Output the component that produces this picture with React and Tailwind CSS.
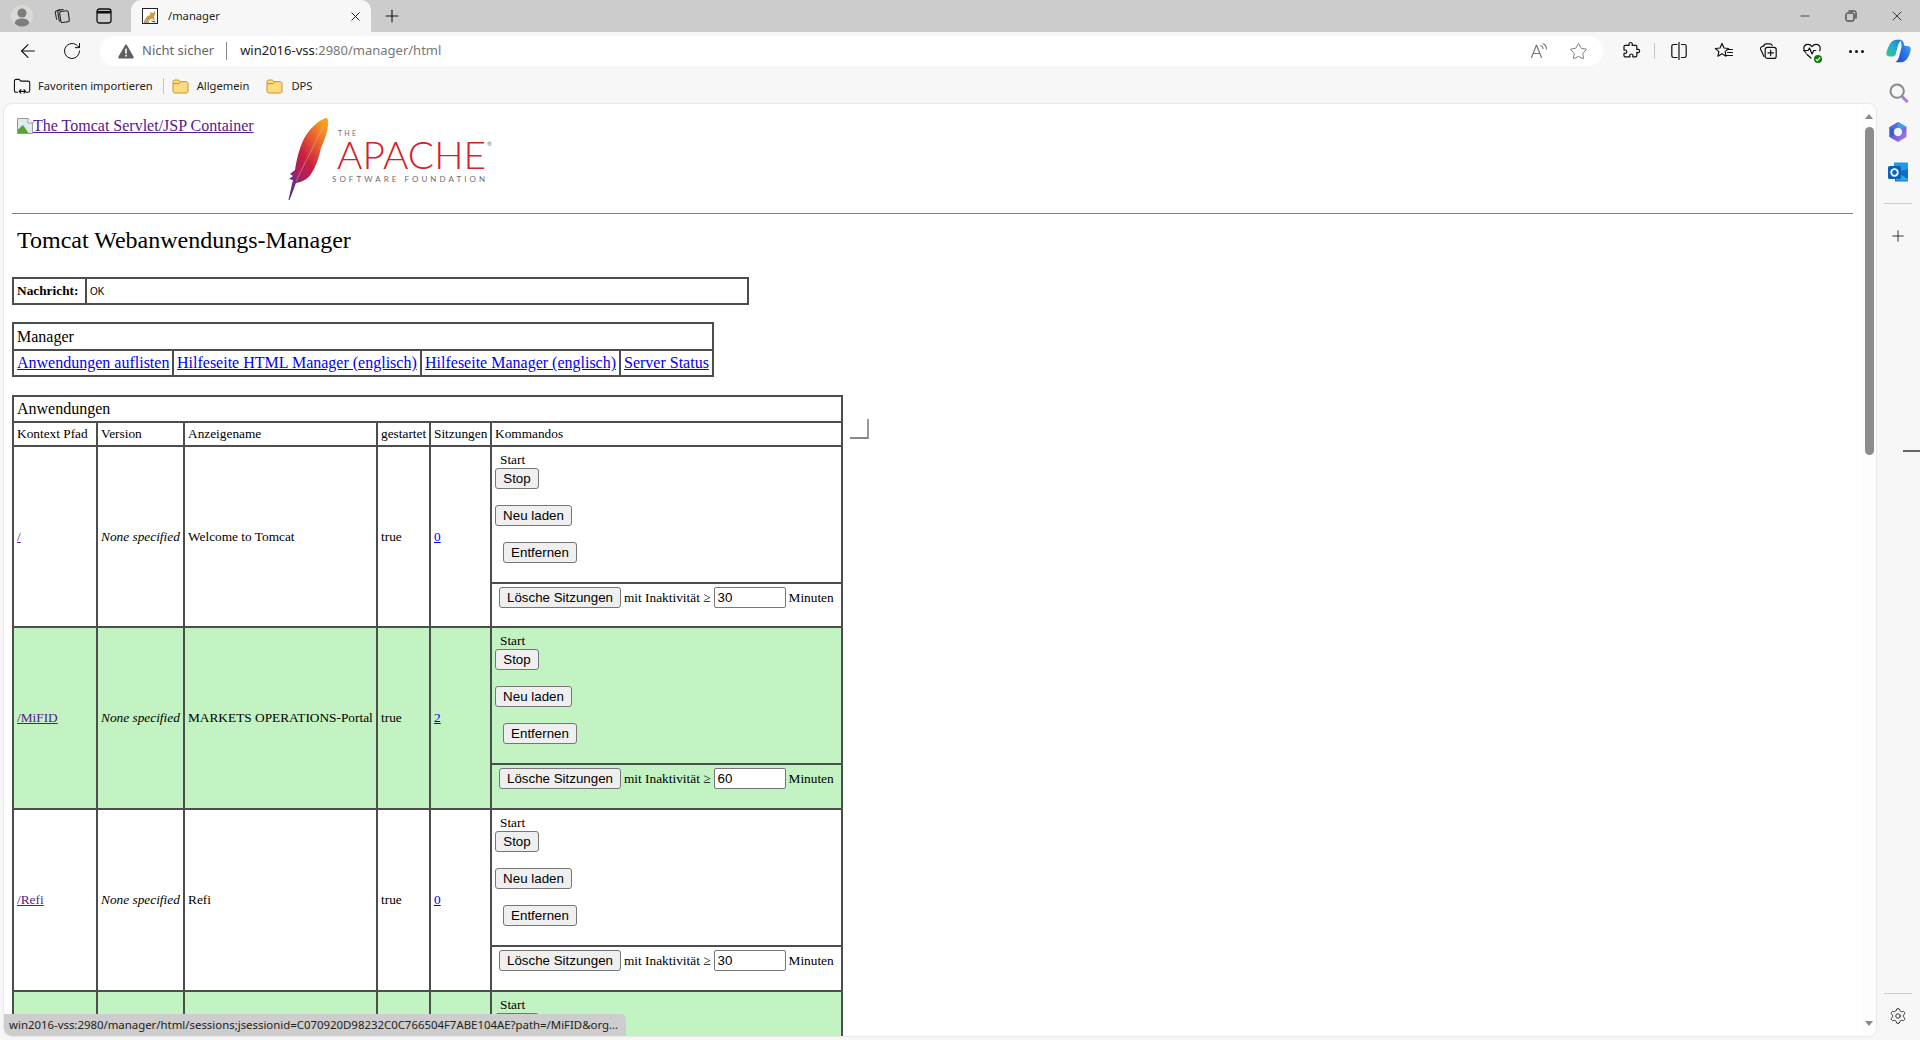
import React from "react";
import { ArrowLeft, Minus, Plus, RotateCw, Search, Settings, Star, X } from "lucide-react";

const sans = "font-['Noto_Sans',sans-serif]";
const ctl = "font-['Liberation_Sans',Arial,sans-serif] text-[13.33px] text-black";
const cell = "border-2 border-[#4d4d4d] px-[3px] py-0";

const Outline = ({ size = 20, children, className = "" }) => (
  <svg
    width={size}
    height={size}
    viewBox="0 0 20 20"
    fill="none"
    stroke="currentColor"
    strokeWidth="1.2"
    strokeLinecap="round"
    strokeLinejoin="round"
    className={className}
  >
    {children}
  </svg>
);

const Profile = () => (
  <svg width="22" height="22" viewBox="0 0 22 22">
    <circle cx="11" cy="11" r="11" fill="#d9d9d5" />
    <circle cx="11" cy="8" r="4.6" fill="#7d7d7d" />
    <path d="M3.6 18.2C4.6 14.6 7.4 13.6 11 13.6s6.4 1 7.4 4.6A10.6 10.6 0 0 1 11 21.6a10.6 10.6 0 0 1-7.4-3.4Z" fill="#7d7d7d" />
  </svg>
);

const CollectionsTab = () => (
  <Outline size={18} className="text-[#222]">
    <rect x="8" y="4.6" width="9.6" height="12.4" rx="1.8" transform="rotate(-8 12 11)" />
    <path d="M7 15.6 5.4 5.6c-.2-1 .3-1.8 1.3-2l4.6-.9" />
    <path d="M4 13.6 2.6 6.4c-.2-1 .3-1.8 1.2-2l4-1.6" />
  </Outline>
);

const VerticalTabs = () => (
  <svg width="16" height="16" viewBox="0 0 16 16" fill="none" stroke="#111" strokeWidth="1.3">
    <rect x="1" y="1" width="14" height="14" rx="2.4" />
    <path d="M1 4.2h14" strokeWidth="2.6" />
  </svg>
);

const TabFavicon = () => (
  <svg width="16" height="16" viewBox="0 0 16 16">
    <rect x="0.5" y="0.5" width="15" height="15" fill="#fff" stroke="#222" />
    <path d="M2 13 5 8.5 8 7l.5-3.5L10 5l2-.5.5-2 1 3-1.6 3.2L13 13l-3-2.4-3.4 2.2Z" fill="#c99a4b" />
    <path d="M2 14h5M9.5 13l4 1" stroke="#444" />
  </svg>
);

const Warning = () => (
  <svg width="16" height="15" viewBox="0 0 16 15">
    <path d="M8 .6c.5 0 .8.2 1 .6l6.6 11.6c.4.7 0 1.6-.9 1.6H1.3c-.9 0-1.3-.9-.9-1.6L7 1.2c.2-.4.5-.6 1-.6Z" fill="#5f5f5f" />
    <rect x="7.2" y="4.6" width="1.6" height="5" fill="#fff" />
    <rect x="7.2" y="10.8" width="1.6" height="1.7" fill="#fff" />
  </svg>
);

const ReadAloud = () => (
  <Outline size={20} className="text-[#777]">
    <path d="M2.5 16.5 7.5 4l5 12.5M4.2 12.5h6.6" />
    <path d="M12 4.5c1.4.6 2 1.6 2 3M14 2.8c2.2.8 3.4 2.6 3.4 5" />
  </Outline>
);

const PuzzleIcon = () => (
  <Outline size={20} className="text-[#111]">
    <path d="M8 2.6c.3-1.5 3-1.5 3.3 0 .1.7-.3 1.2-.2 1.7h3.7c.6 0 1 .4 1 1v3.2c.5.2 1-.3 1.7-.2 1.5.3 1.5 3 0 3.3-.7.1-1.2-.3-1.7-.2v3.4c0 .6-.4 1-1 1h-3c-.1-.6.3-1.1.2-1.7-.3-1.5-3-1.5-3.3 0-.1.6.3 1.1.2 1.7H4c-.6 0-1-.4-1-1v-2.6c.5-.2 1 .2 1.6.1 1.6-.3 1.6-3 0-3.3-.6-.1-1.1.3-1.6.1V5.3c0-.6.4-1 1-1h4.2c.1-.5-.3-1-.2-1.7Z" />
  </Outline>
);

const SplitIcon = () => (
  <Outline size={20} className="text-[#111]">
    <path d="M8 3.5H4.5c-1 0-1.7.7-1.7 1.7v9.6c0 1 .7 1.7 1.7 1.7H8" />
    <path d="M12.5 3.5h3c1 0 1.7.7 1.7 1.7v9.6c0 1-.7 1.7-1.7 1.7h-3" />
    <path d="M10 1.5v17" />
  </Outline>
);

const FavoritesIcon = () => (
  <Outline size={20} className="text-[#111]">
    <path d="M8 2.4 10 7l4.6.5-3.5 3.1 1 4.6L8 12.8l-4.1 2.4 1-4.6L1.4 7.5 6 7Z" />
    <path d="M13.5 8.5h5M13.5 11.5h5M12.5 14.5h6" />
  </Outline>
);

const CollectionsIcon = () => (
  <Outline size={20} className="text-[#111]">
    <path d="M6 15.5 2.6 8.2c-.4-1 0-1.8.8-2.2L6 4.6" />
    <path d="M6 4.8c0-1.3.8-2 2-2h4c1.2 0 1.8.6 2.2 1.6" />
    <rect x="7.2" y="6.4" width="11" height="11" rx="2.2" />
    <path d="M12.7 9.2v5.4M10 11.9h5.4" />
  </Outline>
);

const HealthIcon = () => (
  <div className="relative">
    <Outline size={20} className="text-[#111]">
      <path d="M4 12C2.600 10.800 1.800 9.400 1.800 7.600 1.800 5.200 3.600 3.400 6 3.400c1.600 0 3 .8 4 2.200 1-1.400 2.400-2.200 4-2.200 2.400 0 4.200 1.800 4.200 4.200 0 .8-.2 1.500-.5 2.200" />
      <path d="M1.500 9.500h4.500l1.500-2.500 2.500 6 1.800-3.500h2" />
      <path d="M5 13.500l4 3.500" />
    </Outline>
    <span className="absolute right-0 bottom-[-2px] flex h-[8px] w-[8px] items-center justify-center rounded-full bg-[#107c10]">
      <svg width="6" height="6" viewBox="0 0 6 6" fill="none" stroke="#fff" strokeWidth="1.1">
        <path d="M.8 3.2 2.400 4.600 5.200 1.400" />
      </svg>
    </span>
  </div>
);

const Copilot = () => (
  <svg width="25" height="24" viewBox="0 0 25 24">
    <defs>
      <linearGradient id="copA" x1="0" y1="1" x2="1" y2="0">
        <stop offset="0" stopColor="#35c98a" />
        <stop offset="0.6" stopColor="#1fa7d8" />
        <stop offset="1" stopColor="#1a6fd0" />
      </linearGradient>
      <linearGradient id="copB" x1="0" y1="1" x2="1" y2="0">
        <stop offset="0" stopColor="#1f3fd6" />
        <stop offset="0.6" stopColor="#2f7fe8" />
        <stop offset="1" stopColor="#49c0ee" />
      </linearGradient>
    </defs>
    <path d="M7.500 1.500C9 .6 14 .4 15.500 1.200 13.800 2 12.800 3.800 12 6.500L9.800 15c-.4 1.600-1.200 2.400-3 2.400H3.500C1 17.400-.2 15.500.5 13.200 1.700 9.500 3.500 3.500 7.500 1.500Z" fill="url(#copA)" />
    <path d="M14.600 1C16.300 1 17 2 17.500 3.600L18.600 7H21c2.600 0 4.200 1.600 3.700 4-.9 4-2.700 9.600-6.600 11.400-2 1-6.500 1.200-8.800.6 2-.8 3-2.800 3.800-5.500l2.200-8.500c.4-1.600.2-6-1-8.500Z" fill="url(#copB)" />
  </svg>
);

const SearchColor = () => (
  <div className="relative h-[20px] w-[20px]">
    <Search size={20} strokeWidth={2.4} className="text-[#8a8a8a]" />
    <span className="absolute right-[-1px] bottom-[1px] h-[3px] w-[8px] rotate-45 rounded-sm bg-[#a77fd9]" />
  </div>
);

const M365 = () => (
  <svg width="20" height="22" viewBox="0 0 20 22">
    <defs>
      <linearGradient id="m3a" x1="0" y1="0" x2="1" y2="1">
        <stop offset="0" stopColor="#3f6fe0" />
        <stop offset="0.55" stopColor="#7a5bd8" />
        <stop offset="1" stopColor="#b28be8" />
      </linearGradient>
    </defs>
    <path d="M10 1 18.500 6v10L10 21 1.500 16V6Z" fill="url(#m3a)" strokeLinejoin="round" />
    <path d="M10 1 18.500 6 14 8.500 9 5.500Z" fill="#3fa0e8" />
    <path d="M1.500 6 6 8.500v6L1.500 16Z" fill="#2f62cf" />
    <circle cx="10" cy="11" r="4.200" fill="#eef0fb" />
  </svg>
);

const Outlook = () => (
  <svg width="22" height="22" viewBox="0 0 22 22">
    <path d="M7 1.500h13c.6 0 1 .4 1 1V11H7Z" fill="#1c9ce8" />
    <path d="M8 11 21 8v11.500c0 .6-.4 1-1 1H8Z" fill="#0f6fc6" />
    <path d="M9 11l12 7v1.500H9Z" fill="#2da7ea" />
    <rect x="1" y="5" width="13" height="13" rx="1.500" fill="#0a63b8" />
    <circle cx="7.500" cy="11.500" r="3.300" fill="none" stroke="#fff" strokeWidth="1.800" />
  </svg>
);

const ImportIcon = () => (
  <Outline size={18} className="text-[#111]">
    <path d="M5 17H3.600c-1.300 0-2-.7-2-2V4.400c0-1.100.7-1.800 1.800-1.800h3.400l2 2h7.800c1.200 0 2 .8 2 2V15c0 1.300-.7 2-2 2H15" />
    <path d="M7 16h7M8.800 14 6.800 16l2 2M12.200 14l2 2-2 2" />
  </Outline>
);

const Folder = () => (
  <svg width="17" height="15" viewBox="0 0 17 15">
    <path d="M1 3c0-1.100.7-2 1.800-2h3.400l1.800 1.700h6.200c1.100 0 1.800.8 1.800 1.900V12c0 1.100-.7 2-1.800 2H2.800C1.700 14 1 13.100 1 12Z" fill="#fcdc82" stroke="#c8941c" />
    <path d="M1 4.600h6.200L8.700 3" fill="none" stroke="#c8941c" />
  </svg>
);

const BrokenImage = () => (
  <svg width="16" height="16" viewBox="0 0 16 16" className="shrink-0">
    <path d="M.5.500h10.500l4.500 4.500v10.500H.5Z" fill="#dfe7f3" stroke="#9a9a9a" />
    <path d="M11 .5V5h4.500" fill="#fff" stroke="#9a9a9a" />
    <path d="M1 15v-3.500L6 7l5.500 8Z" fill="#58a336" />
    <path d="M2.500 5.500c1-1.200 2.800-1.200 3.500 0Z" fill="#fff" />
  </svg>
);

const ApacheLogo = () => (
  <svg width="206" height="84" viewBox="0 0 206 84" className="shrink-0">
    <defs>
      <linearGradient id="feather" x1="0.8" y1="0" x2="0.1" y2="1">
        <stop offset="0" stopColor="#f6a01f" />
        <stop offset="0.2" stopColor="#ee6a2c" />
        <stop offset="0.5" stopColor="#c9203f" />
        <stop offset="0.72" stopColor="#a81f5f" />
        <stop offset="0.85" stopColor="#6a2a8c" />
        <stop offset="1" stopColor="#4e2a86" />
      </linearGradient>
    </defs>
    <path
      d="M38 1C30 3 19 14 14 26 10 36 8 46 7 53L2 57l3 2-4 3 4 1-1 4L.5 83h1L8 66c6-1 12-4 15-9 5-7 8-17 10-26 3-7 7-16 7-24 0-4 0-6-2-6Z"
      fill="url(#feather)"
    />
    <path d="M36 8 20 40 8 64" fill="none" stroke="#f3b7a6" strokeWidth="0.5" />
    <g fontFamily="Lato, 'Liberation Sans', sans-serif">
      <text x="50" y="19" fontSize="7" fill="#6d6e71" textLength="18">THE</text>
      <text x="49" y="51.500" fontSize="37" fontWeight="300" fill="#d22128" textLength="149" lengthAdjust="spacingAndGlyphs">APACHE</text>
      <text x="199" y="29" fontSize="6" fill="#6d6e71">®</text>
      <text x="44" y="65" fontSize="8" fill="#6d6e71" textLength="153">SOFTWARE FOUNDATION</text>
    </g>
  </svg>
);

const Btn = ({ children, className = "" }) => (
  <button className={`${ctl} block h-[21px] rounded-[3px] border border-[#767676] bg-[#efefef] ${className}`}>
    {children}
  </button>
);

const AppRows = ({ app }) => (
  <>
    <tr className={app.green ? "bg-[#c3f3c3]" : "bg-white"}>
      <td rowSpan={2} className={`${cell} text-[13.33px]`}>
        <a className="text-[#551a8b] underline">{app.path}</a>
      </td>
      <td rowSpan={2} className={`${cell} text-[13.33px] whitespace-nowrap italic`}>{app.path !== "" && "None specified"}</td>
      <td rowSpan={2} className={`${cell} text-[13.33px] whitespace-nowrap`}>{app.name}</td>
      <td rowSpan={2} className={`${cell} text-[13.33px]`}>{app.path !== "" && "true"}</td>
      <td rowSpan={2} className={`${cell} text-[13.33px]`}>
        <a className="text-[#0000ee] underline">{app.sessions}</a>
      </td>
      <td className={`${cell} h-[137px] align-top`}>
        <div className="flex flex-col items-start pt-[5px]">
          <span className="ml-[5px] text-[13.33px] leading-[16px]">Start</span>
          <Btn className="w-[44px]">Stop</Btn>
          <Btn className="mt-[16px] w-[77px]">Neu laden</Btn>
          <Btn className="mt-[16px] ml-[8px] w-[74px]">Entfernen</Btn>
        </div>
      </td>
    </tr>
    <tr className={app.green ? "bg-[#c3f3c3]" : "bg-white"}>
      <td className={`${cell} ${app.first ? "h-[44px]" : "h-[45px]"} align-top`}>
        <div className="flex items-center pt-[3px] pl-[4px] text-[13.33px]">
          <Btn className="w-[122px]">Lösche Sitzungen</Btn>
          <span className="ml-[3px]">mit Inaktivität ≥</span>
          <div className={`${ctl} ml-[3px] flex h-[21px] w-[72px] items-center rounded-[2px] border border-[#767676] bg-white pl-[3px]`}>
            {app.idle}
          </div>
          <span className="ml-[3px]">Minuten</span>
        </div>
      </td>
    </tr>
  </>
);

const apps = [
  { path: "/", name: "Welcome to Tomcat", sessions: "0", idle: "30", green: false, first: true },
  { path: "/MiFID", name: "MARKETS OPERATIONS-Portal", sessions: "2", idle: "60", green: true },
  { path: "/Refi", name: "Refi", sessions: "0", idle: "30", green: false },
  { path: "", name: "", sessions: "", idle: "", green: true },
];

const App = () => {
  return (
    <div className={`${sans} flex h-[1040px] w-[1920px] flex-col overflow-hidden bg-[#f7f7f7] text-[#222]`}>
      {/* title bar */}
      <div className="flex h-[32px] shrink-0 items-center bg-[#cccccc]">
        <div className="flex w-[44px] justify-center"><Profile /></div>
        <div className="flex w-[36px] justify-center"><CollectionsTab /></div>
        <div className="flex w-[48px] justify-center"><VerticalTabs /></div>
        <div className="ml-[3px] flex h-full w-[240px] items-center rounded-t-[10px] bg-[#f7f7f7] pl-[11px]">
          <TabFavicon />
          <span className="ml-[10px] flex-1 text-[11.2px]">/manager</span>
          <X size={15} strokeWidth={1.5} className="mr-[8px] text-[#111]" />
        </div>
        <div className="flex w-[42px] justify-center"><Plus size={20} strokeWidth={1.3} className="text-[#111]" /></div>
        <div className="flex-1" />
        <div className="flex w-[46px] justify-center"><Minus size={14} strokeWidth={1.2} className="text-[#111]" /></div>
        <div className="flex w-[46px] justify-center">
          <svg width="12" height="12" viewBox="0 0 12 12" fill="none" stroke="#111">
            <rect x="1" y="3" width="8" height="8" rx="1.500" />
            <path d="M3.500 1H9.500c.9 0 1.500.6 1.500 1.500V8.500" />
          </svg>
        </div>
        <div className="flex w-[46px] justify-center"><X size={16} strokeWidth={1.2} className="text-[#111]" /></div>
      </div>

      {/* toolbar */}
      <div className="flex h-[38px] shrink-0 items-center">
        <div className="ml-[6px] flex w-[44px] justify-center"><ArrowLeft size={22} strokeWidth={1.2} className="text-[#111]" /></div>
        <div className="flex w-[44px] justify-center"><RotateCw size={20} strokeWidth={1.2} className="text-[#111]" /></div>
        <div className="ml-[6px] flex h-[30px] flex-1 items-center rounded-full bg-white pl-[18px]">
          <Warning />
          <span className="ml-[8px] text-[13px] text-[#666]">Nicht sicher</span>
          <span className="mr-[13px] ml-[12px] h-[18px] w-px bg-[#888]" />
          <span className="text-[13px] text-[#222]">win2016-vss</span>
          <span className="text-[13px] text-[#777]">:2980/manager/html</span>
          <div className="flex-1" />
          <ReadAloud />
          <Star size={19} strokeWidth={1.2} className="mr-[15px] ml-[20px] text-[#777]" />
        </div>
        <div className="ml-[6px] flex w-[44px] justify-center"><PuzzleIcon /></div>
        <div className="mx-[1px] h-[16px] w-px bg-[#c4c4c4]" />
        <div className="flex w-[46px] justify-center"><SplitIcon /></div>
        <div className="flex w-[44px] justify-center"><FavoritesIcon /></div>
        <div className="flex w-[44px] justify-center"><CollectionsIcon /></div>
        <div className="flex w-[44px] justify-center"><HealthIcon /></div>
        <div className="flex w-[44px] justify-center gap-[3px]">
          <span className="h-[3px] w-[3px] rounded-full bg-[#111]" />
          <span className="h-[3px] w-[3px] rounded-full bg-[#111]" />
          <span className="h-[3px] w-[3px] rounded-full bg-[#111]" />
        </div>
        <div className="mr-[2px] flex w-[40px] justify-center"><Copilot /></div>
      </div>

      <div className="flex min-h-0 flex-1">
        <div className="flex min-w-0 flex-1 flex-col">
          {/* bookmarks */}
          <div className="flex h-[34px] shrink-0 items-center pb-[2px] pl-[13px] text-[11.2px]">
            <ImportIcon />
            <span className="ml-[7px]">Favoriten importieren</span>
            <span className="mr-[8px] ml-[10px] h-[16px] w-px bg-[#c4c4c4]" />
            <Folder />
            <span className="ml-[8px]">Allgemein</span>
            <span className="ml-[17px]"><Folder /></span>
            <span className="ml-[8px]">DPS</span>
          </div>

          {/* page */}
          <div className="relative mb-[4px] ml-[4px] flex min-h-0 flex-1 overflow-hidden rounded-t-[8px] rounded-b-[8px] bg-white shadow-[0_0_2px_rgba(0,0,0,0.18)]">
            <div className="min-w-0 flex-1 overflow-hidden font-['Liberation_Serif',serif] text-[16px] text-black">
              <div className="flex h-[109px] items-start">
                <a className="mt-[10px] ml-[13px] flex w-[271px] items-center text-[#551a8b] underline">
                  <BrokenImage />
                  <span>The Tomcat Servlet/JSP Container</span>
                </a>
                <div className="mt-[13px]"><ApacheLogo /></div>
              </div>
              <div className="mr-[9px] ml-[8px] h-px bg-[#808080]" />

              <div className="mt-[13px] ml-[13px] text-[24px] leading-[27px]">Tomcat Webanwendungs-Manager</div>

              {/* message */}
              <table className="mt-[23px] ml-[8px] w-[737px] table-fixed border-collapse">
                <colgroup>
                  <col className="w-[73px]" />
                  <col />
                </colgroup>
                <tbody>
                  <tr>
                    <td className={`${cell} h-[26px] text-[13.33px] font-bold`}>Nachricht:</td>
                    <td className={`${cell} font-['Liberation_Sans',sans-serif] text-[10px]`}>OK</td>
                  </tr>
                </tbody>
              </table>

              {/* manager links */}
              <table className="mt-[17px] ml-[8px] w-[702px] table-fixed border-collapse">
                <colgroup>
                  <col className="w-[160px]" />
                  <col className="w-[248px]" />
                  <col className="w-[199px]" />
                  <col />
                </colgroup>
                <tbody>
                  <tr>
                    <td colSpan={4} className={`${cell} h-[27px]`}>Manager</td>
                  </tr>
                  <tr>
                    {["Anwendungen auflisten", "Hilfeseite HTML Manager (englisch)", "Hilfeseite Manager (englisch)", "Server Status"].map((t) => (
                      <td key={t} className={`${cell} h-[26px] whitespace-nowrap`}>
                        <a className="text-[#0000ee] underline">{t}</a>
                      </td>
                    ))}
                  </tr>
                </tbody>
              </table>

              {/* applications */}
              <table className="mt-[18px] ml-[8px] w-[831px] table-fixed border-collapse">
                <colgroup>
                  <col className="w-[84px]" />
                  <col className="w-[87px]" />
                  <col className="w-[193px]" />
                  <col className="w-[53px]" />
                  <col className="w-[61px]" />
                  <col />
                </colgroup>
                <tbody>
                  <tr>
                    <td colSpan={6} className={`${cell} h-[24px]`}>Anwendungen</td>
                  </tr>
                  <tr className="text-[13.33px]">
                    <td className={`${cell} h-[24px] whitespace-nowrap`}>Kontext Pfad</td>
                    <td className={cell}>Version</td>
                    <td className={cell}>Anzeigename</td>
                    <td className={cell}>gestartet</td>
                    <td className={cell}>Sitzungen</td>
                    <td className={cell}>Kommandos</td>
                  </tr>
                  {apps.map((app, i) => (
                    <AppRows key={i} app={app} />
                  ))}
                </tbody>
              </table>
            </div>

            {/* scrollbar */}
            <div className="flex w-[14px] shrink-0 flex-col items-center bg-[#fdfdfd] pt-[10px]">
              <span className="h-0 w-0 border-x-[4px] border-b-[5px] border-x-transparent border-b-[#888]" />
              <span className="mt-[8px] h-[328px] w-[9px] rounded-full bg-[#8c8c8c]" />
              <span className="flex-1" />
              <span className="mb-[10px] h-0 w-0 border-x-[4px] border-t-[5px] border-x-transparent border-t-[#888]" />
            </div>

            {/* stray corner */}
            <div className="absolute top-[315px] left-[846px] h-[20px] w-[19px] border-r-2 border-b-2 border-r-[#999] border-b-[#888]" />

            {/* status bubble */}
            <div className={`${sans} absolute bottom-0 left-0 flex h-[22px] w-[622px] items-center rounded-tr-[5px] bg-[#cdcdcd] pl-[5px] text-[11.4px] text-[#222]`}>
              win2016-vss:2980/manager/html/sessions;jsessionid=C070920D98232C0C766504F7ABE104AE?path=/MiFID&amp;org...
            </div>
          </div>
        </div>

        {/* sidebar */}
        <div className="flex w-[44px] shrink-0 flex-col items-center pt-[2px]">
          <div className="flex h-[40px] items-center"><SearchColor /></div>
          <div className="flex h-[40px] items-center"><M365 /></div>
          <div className="flex h-[40px] items-center"><Outlook /></div>
          <div className="mt-[11px] h-px w-[28px] bg-[#d0d0d0]" />
          <div className="mt-[12px] flex h-[40px] items-center"><Plus size={18} strokeWidth={1.2} className="text-[#222]" /></div>
          <div className="mt-[194px] h-[2px] w-[17px] self-end bg-[#666]" />
          <div className="flex-1" />
          <div className="h-px w-[28px] bg-[#d0d0d0]" />
          <div className="mb-[2px] flex h-[44px] items-center"><Settings size={18} strokeWidth={1.2} className="text-[#222]" /></div>
        </div>
      </div>
    </div>
  );
};

export default App;
